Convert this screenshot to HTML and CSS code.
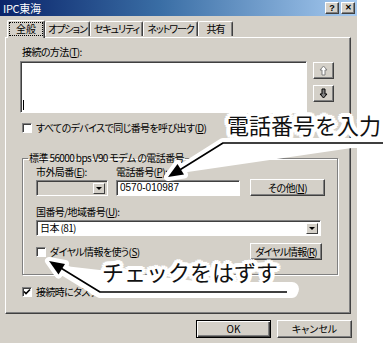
FILE: index.html
```html
<!DOCTYPE html>
<html lang="ja">
<head>
<meta charset="utf-8">
<link rel="stylesheet" href="styles.css">
</head>
<body>
<div class="dialog">
  <div class="titlebar">
    <span class="title">IPC東海</span>
    <div class="tbtns"><span class="tbtn">?</span><span class="tbtn x">✕</span></div>
  </div>
  <div class="tabs">
    <div class="tab active t1">全般</div>
    <div class="tab t2">オプション</div>
    <div class="tab t3">セキュリティ</div>
    <div class="tab t4">ネットワーク</div>
    <div class="tab t5">共有</div>
  </div>
  <div class="panel">
    <div class="label lbl-method">接続の方法(<u>T</u>):</div>
    <div class="list-row">
      <div class="listbox"><span class="caret"></span></div>
      <div class="updown">
        <span class="sbtn"><svg width="9" height="11" viewBox="0 0 9 11"><path d="M4.5 1 L8 5 L6 5 L6 10 L3 10 L3 5 L1 5 Z" fill="#fff" stroke="#808080" stroke-width="1"/></svg></span>
        <span class="sbtn"><svg width="9" height="11" viewBox="0 0 9 11"><path d="M3 1 L6 1 L6 6 L8 6 L4.5 10 L1 6 L3 6 Z" fill="#808080" stroke="#000" stroke-width="1"/></svg></span>
      </div>
    </div>
    <div class="check-row cr1"><span class="cbox"></span><span>すべてのデバイスで同じ番号を呼び出す(<u>D</u>)</span></div>
    <fieldset class="group">
      <legend>標準 56000 bps V90 モデム の電話番号</legend>
      <div class="row1">
        <div class="col c-area">
          <div class="label">市外局番(<u>E</u>):</div>
          <div class="combo disabled"><span class="dd"><i></i></span></div>
        </div>
        <div class="col c-phone">
          <div class="label">電話番号(<u>P</u>):</div>
          <div class="input">0570-010987</div>
        </div>
        <span class="btn b-other">その他(<u>N</u>)</span>
      </div>
      <div class="label lbl-country">国番号/地域番号(<u>U</u>):</div>
      <div class="combo country"><span class="ctext">日本 (81)</span><span class="dd"><i></i></span></div>
      <div class="row3">
        <div class="check-row"><span class="cbox"></span><span>ダイヤル情報を使う(<u>S</u>)</span></div>
        <span class="btn b-dial">ダイヤル情報(<u>R</u>)</span>
      </div>
    </fieldset>
    <div class="check-row cr3"><span class="cbox checked"><svg width="8" height="8" viewBox="0 0 8 8"><path d="M1 3.5 L3 5.5 L7 1.5" fill="none" stroke="#000" stroke-width="1.6"/></svg></span><span>接続時にタスクバーにアイコンを表示する(<u>W</u>)</span></div>
  </div>
  <div class="footer">
    <span class="btn fbtn default">OK</span>
    <span class="btn fbtn">キャンセル</span>
  </div>
</div>

<svg class="arrows" width="390" height="343" viewBox="0 0 390 343">
  <g stroke="#fff" stroke-linecap="round" stroke-linejoin="round" fill="#fff">
    <polyline points="386,143 223,143 174,174" stroke-width="10"/>
    <polygon points="168,177 184,174.5 177.5,164" stroke-width="8"/>
    <polyline points="292,292 100,292 56,265" stroke-width="12"/>
    <polyline points="292,289 96,289" stroke-width="14"/>
    <polygon points="49,261 65,264 58.5,274.5" stroke-width="8"/>
  </g>
  <g stroke="#000" stroke-width="1.6" fill="none" stroke-linejoin="round">
    <polyline points="383,143 223,143 178,171"/>
    <polyline points="287,292 100,292 60,267.5"/>
  </g>
  <g fill="#000">
    <polygon points="168,177 184,174.5 177.5,164"/>
    <polygon points="49,261 65,264 58.5,274.5"/>
  </g>
</svg>
<div class="annot a1">電話番号を入力</div>
<div class="annot a2">チェックをはずす</div>
</body>
</html>
```
FILE: styles.css
```css
html, body {
  margin: 0;
  padding: 0;
  background: #fff;
}
body {
  width: 390px;
  height: 343px;
  overflow: hidden;
  position: relative;
  font-family: "Noto Sans CJK JP", "Liberation Sans", sans-serif;
  font-size: 10px;
  font-feature-settings: "palt";
  letter-spacing: -0.6px;
  color: #000;
}
u { text-decoration: underline; text-underline-offset: 1px; }

.dialog {
  width: 357px;
  height: 343px;
  background: #d4d0c8;
  box-sizing: border-box;
}

.titlebar {
  height: 16px;
  background: linear-gradient(to right, #0a246a 0%, #3a6ea5 45%, #a6caf0 100%);
  display: flex;
  align-items: center;
  justify-content: space-between;
  padding: 0 2px 0 3px;
}
.title {
  color: #fff;
  font-size: 11px;
  line-height: 14px;
  letter-spacing: -0.3px;
}
.tbtns { display: flex; gap: 2px; }
.tbtn {
  width: 12px;
  height: 10px;
  background: #d4d0c8;
  border-top: 1px solid #fff;
  border-left: 1px solid #fff;
  border-right: 1px solid #404040;
  border-bottom: 1px solid #404040;
  box-shadow: inset -1px -1px 0 #808080;
  font: bold 9px/10px "Liberation Sans", sans-serif;
  letter-spacing: 0;
  text-align: center;
}
.tbtn.x { font-size: 8px; }

.tabs {
  display: flex;
  height: 17px;
  margin-top: 4px;
  padding-left: 7px;
  position: relative;
  z-index: 2;
  align-items: flex-end;
}
.tab {
  box-sizing: border-box;
  height: 15px;
  line-height: 13px;
  text-align: center;
  border-top: 1px solid #fff;
  border-left: 1px solid #fff;
  border-right: 1px solid #404040;
  box-shadow: inset -1px 0 0 #808080;
  border-radius: 2px 2px 0 0;
  background: #d4d0c8;
  margin-bottom: 1px;
  white-space: nowrap;
  letter-spacing: -1.1px;
  overflow: hidden;
}
.tab.active {
  height: 18px;
  margin-bottom: -1px;
  line-height: 15px;
  letter-spacing: 0;
}
.t1 { width: 38px; }
.t2 { width: 45px; }
.t3 { width: 53px; }
.t4 { width: 55px; }
.t5 { width: 35px; }
.t1 {
  outline: 1px dotted #000;
  outline-offset: -3px;
}

.panel {
  margin-left: 5px;
  width: 346px;
  height: 277px;
  box-sizing: border-box;
  border-top: 1px solid #fff;
  border-left: 1px solid #fff;
  border-right: 1px solid #404040;
  border-bottom: 1px solid #404040;
  box-shadow: inset -1px -1px 0 #808080;
  position: relative;
  z-index: 1;
}

.label {
  line-height: 12px;
  white-space: nowrap;
}
.lbl-method {
  margin: 8px 0 0 16px;
}

.list-row {
  display: flex;
  margin: 3px 0 0 14px;
  gap: 6px;
}
.listbox {
  width: 287px;
  height: 52px;
  box-sizing: border-box;
  background: #fff;
  border-top: 1px solid #808080;
  border-left: 1px solid #808080;
  border-right: 1px solid #fff;
  border-bottom: 1px solid #fff;
  box-shadow: inset 1px 1px 0 #404040;
  position: relative;
}
.caret {
  position: absolute;
  left: 2px;
  bottom: 2px;
  width: 1px;
  height: 10px;
  background: #000;
}
.updown {
  display: flex;
  flex-direction: column;
  gap: 6px;
  padding-top: 1px;
}
.sbtn {
  width: 21px;
  height: 17px;
  box-sizing: border-box;
  background: #d4d0c8;
  border-top: 1px solid #fff;
  border-left: 1px solid #fff;
  border-right: 1px solid #404040;
  border-bottom: 1px solid #404040;
  box-shadow: inset -1px -1px 0 #808080;
  display: flex;
  align-items: center;
  justify-content: center;
}

.check-row {
  display: flex;
  align-items: center;
  gap: 4px;
  line-height: 12px;
  white-space: nowrap;
}
.cr1 { margin: 9px 0 0 16px; }
.cr3 { margin: 11px 0 0 16px; }
.cbox {
  width: 10px;
  height: 10px;
  box-sizing: border-box;
  background: #fff;
  border-top: 1px solid #808080;
  border-left: 1px solid #808080;
  border-right: 1px solid #fff;
  border-bottom: 1px solid #fff;
  box-shadow: inset 1px 1px 0 #404040;
  display: flex;
  align-items: center;
  justify-content: center;
  flex: none;
}

.group {
  margin: 18px 0 0 16px;
  width: 316px;
  box-sizing: border-box;
  border: 1px solid #808080;
  box-shadow: 1px 1px 0 #fff, inset 1px 1px 0 #fff;
  padding: 0 0 14px 13px;
  min-width: 0;
}
.group legend {
  line-height: 12px;
  padding: 0 1px;
  margin-left: -8px;
  white-space: nowrap;
}

.row1 {
  display: flex;
  align-items: flex-end;
  margin-top: 2px;
}
.col { display: flex; flex-direction: column; gap: 2px; }
.c-area { width: 72px; }
.c-phone { width: 124px; margin-left: 8px; }

.combo, .input {
  height: 16px;
  box-sizing: border-box;
  border-top: 1px solid #808080;
  border-left: 1px solid #808080;
  border-right: 1px solid #fff;
  border-bottom: 1px solid #fff;
  box-shadow: inset 1px 1px 0 #404040;
  background: #fff;
  display: flex;
  align-items: center;
  justify-content: space-between;
  padding: 2px 2px 2px 3px;
}
.combo.disabled { background: #d4d0c8; justify-content: flex-end; }
.input {
  font-family: "Liberation Sans", "Noto Sans CJK JP", sans-serif;
  font-size: 10px;
  line-height: 12px;
  letter-spacing: 0;
}
.dd {
  width: 12px;
  height: 11px;
  box-sizing: border-box;
  background: #d4d0c8;
  border-top: 1px solid #fff;
  border-left: 1px solid #fff;
  border-right: 1px solid #404040;
  border-bottom: 1px solid #404040;
  display: flex;
  align-items: center;
  justify-content: center;
}
.dd i {
  width: 0;
  height: 0;
  border-left: 3px solid transparent;
  border-right: 3px solid transparent;
  border-top: 3px solid #000;
}

.btn {
  box-sizing: border-box;
  height: 17px;
  background: #d4d0c8;
  border-top: 1px solid #fff;
  border-left: 1px solid #fff;
  border-right: 1px solid #404040;
  border-bottom: 1px solid #404040;
  box-shadow: inset -1px -1px 0 #808080;
  display: flex;
  align-items: center;
  justify-content: center;
  line-height: 12px;
  white-space: nowrap;
}
.b-other { width: 75px; margin-left: 10px; height: 17px; }

.lbl-country { margin-top: 10px; }
.country { width: 285px; margin-top: 2px; }
.ctext { line-height: 12px; }

.row3 {
  display: flex;
  align-items: center;
  justify-content: space-between;
  width: 286px;
  margin-top: 7px;
}
.b-dial { width: 72px; letter-spacing: -0.9px; }

.footer {
  display: flex;
  justify-content: flex-end;
  gap: 6px;
  padding: 6px 5px 0 0;
}
.fbtn { width: 75px; height: 18px; letter-spacing: 0; }
.fbtn.default {
  border: 1px solid #000;
  box-shadow: inset 1px 1px 0 #fff, inset -1px -1px 0 #404040, inset -2px -2px 0 #808080;
}

.arrows {
  position: absolute;
  left: 0;
  top: 0;
  z-index: 5;
}
.annot {
  position: absolute;
  z-index: 6;
  font-family: "Noto Sans CJK JP", sans-serif;
  font-feature-settings: normal;
  letter-spacing: 0;
  font-size: 22px;
  line-height: 24px;
  color: #111;
  white-space: nowrap;
  text-shadow:
    3px 0 0 #fff, -3px 0 0 #fff, 0 3px 0 #fff, 0 -3px 0 #fff,
    2px 2px 0 #fff, -2px 2px 0 #fff, 2px -2px 0 #fff, -2px -2px 0 #fff,
    4px 1px 0 #fff, -4px 1px 0 #fff, 1px 4px 0 #fff, 1px -4px 0 #fff,
    4px -1px 0 #fff, -4px -1px 0 #fff, -1px 4px 0 #fff, -1px -4px 0 #fff,
    3px 3px 0 #fff, -3px 3px 0 #fff, 3px -3px 0 #fff, -3px -3px 0 #fff;
}
.a1 { left: 227px; top: 112px; }
.a2 { left: 102px; top: 259px; }
```
